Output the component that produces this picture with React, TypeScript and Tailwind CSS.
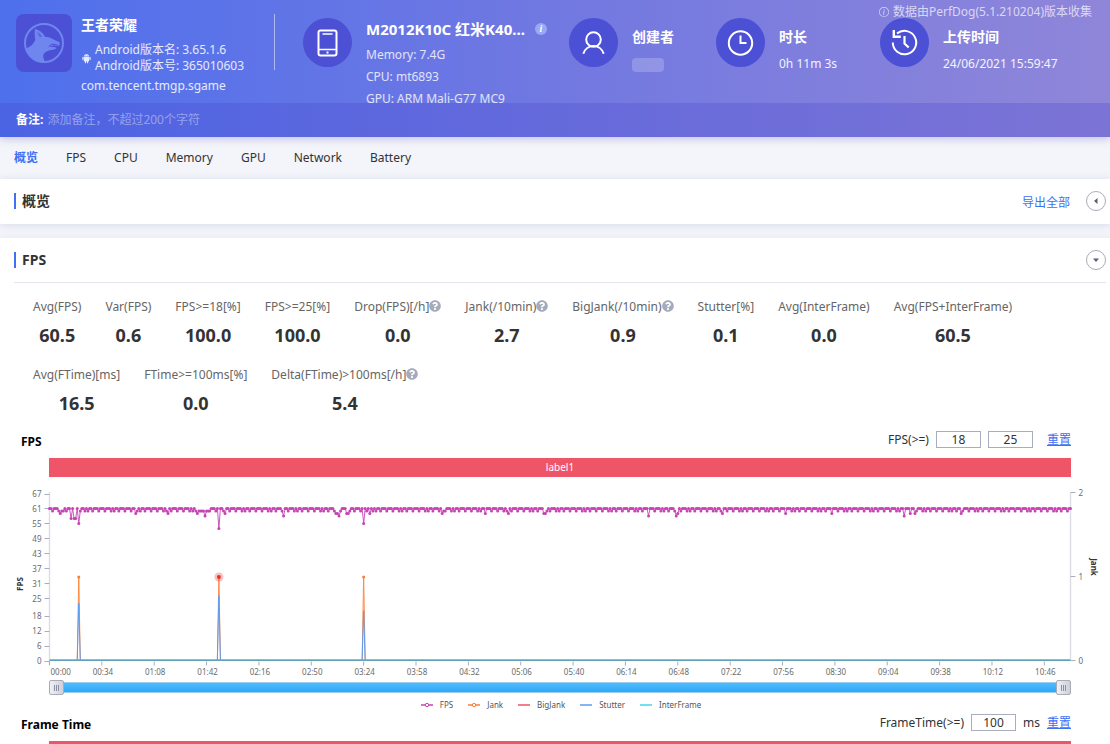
import { useLayoutEffect, useRef, useState } from 'react'
import type { ReactNode } from 'react'
import { AiFillAndroid } from 'react-icons/ai'
import { BsInfoCircle } from 'react-icons/bs'
import { FaQuestionCircle } from 'react-icons/fa'

interface Stat {
  label: string
  value: string
  help?: boolean
}

const TABS = ['概览', 'FPS', 'CPU', 'Memory', 'GPU', 'Network', 'Battery']

const STATS: Stat[] = [
  { label: 'Avg(FPS)', value: '60.5' },
  { label: 'Var(FPS)', value: '0.6' },
  { label: 'FPS>=18[%]', value: '100.0' },
  { label: 'FPS>=25[%]', value: '100.0' },
  { label: 'Drop(FPS)[/h]', value: '0.0', help: true },
  { label: 'Jank(/10min)', value: '2.7', help: true },
  { label: 'BigJank(/10min)', value: '0.9', help: true },
  { label: 'Stutter[%]', value: '0.1' },
  { label: 'Avg(InterFrame)', value: '0.0' },
  { label: 'Avg(FPS+InterFrame)', value: '60.5' },
]

const FRAME_STATS: Stat[] = [
  { label: 'Avg(FTime)[ms]', value: '16.5' },
  { label: 'FTime>=100ms[%]', value: '0.0' },
  { label: 'Delta(FTime)>100ms[/h]', value: '5.4', help: true },
]

const DURATION = 663
const FPS_TICKS = [67, 61, 55, 49, 43, 37, 31, 25, 18, 12, 6, 0]

// seconds where the frame rate leaves the usual 60/61 band
const DIPS: Record<number, number> = {
  7: 59, 8: 60, 9: 60, 14: 57, 15: 61, 16: 57, 17: 57, 18: 61, 19: 55, 20: 60, 56: 59, 77: 59,
  95: 60, 96: 59, 97: 60, 98: 60, 99: 60, 100: 60, 101: 58, 102: 60, 103: 60, 110: 53, 114: 59,
  152: 58, 186: 59, 187: 59, 188: 58, 193: 59, 194: 59, 204: 55, 208: 59, 255: 59, 256: 60, 283: 59,
  298: 59, 321: 59, 322: 59, 323: 60, 389: 58, 407: 58, 408: 59, 437: 59, 478: 59, 508: 59, 555: 58,
  559: 59, 562: 59, 592: 59,
}
const PATTERN = [61, 61, 60, 61, 61, 61, 60, 61, 60, 61, 61, 60, 61, 61, 61, 60, 61]
const FPS_SERIES = Array.from({ length: DURATION + 1 }, (_, t) => DIPS[t] ?? PATTERN[t % PATTERN.length])

const JANKS = [
  { t: 19, stutter: 23 },
  { t: 110, stutter: 26 },
  { t: 204, stutter: 20 },
]

const LEGEND = [
  { name: 'FPS', color: '#c644b4', dot: true },
  { name: 'Jank', color: '#fb7d3c', dot: true },
  { name: 'BigJank', color: '#ee5566', dot: false },
  { name: 'Stutter', color: '#5c9df5', dot: false },
  { name: 'InterFrame', color: '#45d5ee', dot: false },
]

function formatTime(seconds: number) {
  const m = String(Math.floor(seconds / 60)).padStart(2, '0')
  const s = String(seconds % 60).padStart(2, '0')
  return `${m}:${s}`
}

function WolfLogo() {
  return (
    <svg viewBox="6 6 168 174" className="h-[58px] w-14 shrink-0 rounded-lg bg-[#4b50d4]" aria-label="PerfDog">
      <circle cx="90" cy="93" r="57" fill="none" stroke="#6f86ee" strokeWidth="6" />
      <path
        d="M63 50 L78 57 Q88 64 93 74 Q108 74 120 83 L137 91 L137 98 L131 102 L118 100 L106 105 L122 105 L128 109 Q118 115 108 115 Q92 119 88 128 Q86 138 92 148 Q66 150 48 132 Q38 120 38 108 Q54 104 64 84 Q60 66 63 50 Z"
        fill="#6f86ee"
      />
      <path d="M69 60 Q80 64 85 74 L77 76 Q73 68 69 60 Z" fill="#5b67df" />
      <path d="M104 104 L114 96 L131 99" fill="none" stroke="#4b50d4" strokeWidth="3" />
    </svg>
  )
}

function RoundIcon({ children }: { children: ReactNode }) {
  return (
    <svg
      viewBox="0 0 49 49"
      className="h-[49px] w-[49px] shrink-0 rounded-full bg-[#4b50d4]"
      fill="none"
      stroke="#fff"
      strokeWidth="2"
      aria-hidden="true"
    >
      {children}
    </svg>
  )
}

function Header() {
  return (
    <header className="relative z-10 bg-linear-to-r/srgb from-[#4e70ed] via-[#7178e1] to-[#8f86d9] text-white shadow-[0_2px_8px_rgba(100,95,200,0.35)]">
      <p className="absolute top-1 right-[18px] flex items-center gap-1 leading-4 text-white/70">
        <BsInfoCircle size={10} />
        数据由PerfDog(5.1.210204)版本收集
      </p>
      <div className="flex h-[103px] items-start overflow-hidden">
        <div className="flex w-[303px] shrink-0 pt-3.5 pl-4">
          <WolfLogo />
          <div className="w-[202px] pl-[9px]">
            <h1 className="text-sm leading-[22px] font-bold">王者荣耀</h1>
            <div className="mt-1.5 flex items-center gap-[3px] leading-4 text-white/85">
              <AiFillAndroid size={11} className="shrink-0" />
              <p className="whitespace-nowrap">
                Android版本名: 3.65.1.6
                <br />
                Android版本号: 365010603
              </p>
            </div>
            <p className="mt-1 leading-4 text-white/85">com.tencent.tmgp.sgame</p>
          </div>
          <div className="h-14 w-px bg-white/50" />
        </div>
        <div className="flex w-[266px] shrink-0 gap-3.5 pt-[18px]">
          <RoundIcon>
            <rect x="15.5" y="12.5" width="18" height="25" rx="2" />
            <path d="M19.5 16h10M16 31.5h17" strokeWidth="1.6" />
            <path d="M23.5 34.5h2" />
          </RoundIcon>
          <div className="leading-[22px] whitespace-nowrap text-white/80">
            <h2 className="flex items-center gap-2.5 text-[15px] leading-[22px] font-bold text-white">
              M2012K10C 红米K40...
              <span className="flex size-3 items-center justify-center rounded-full bg-[#9aa8f4] font-['Liberation_Serif',serif] text-[10px] leading-3 italic">
                i
              </span>
            </h2>
            <p className="mt-1">Memory: 7.4G</p>
            <p>CPU: mt6893</p>
            <p>GPU: ARM Mali-G77 MC9</p>
          </div>
        </div>
        <div className="flex w-[147px] shrink-0 gap-3.5 pt-[18px]">
          <RoundIcon>
            <circle cx="24.5" cy="21.5" r="7.3" />
            <path d="M14.3 35.8A10.6 10.6 0 0 1 34.7 35.8" />
          </RoundIcon>
          <div className="pt-[9px]">
            <h2 className="text-sm leading-5 font-bold">创建者</h2>
            <div className="mt-[11px] h-3.5 w-8 rounded-sm bg-white/20" />
          </div>
        </div>
        <div className="flex w-[164px] shrink-0 gap-3.5 pt-[18px]">
          <RoundIcon>
            <circle cx="24.5" cy="25" r="11.7" />
            <path d="M24.5 17.5v7.5h6" />
          </RoundIcon>
          <div className="pt-[9px]">
            <h2 className="text-sm leading-5 font-bold">时长</h2>
            <p className="mt-[9px] leading-4 text-white/90">0h 11m 3s</p>
          </div>
        </div>
        <div className="flex gap-3.5 pt-[18px]">
          <RoundIcon>
            <path d="M12.8 24.5A11.7 11.7 0 1 0 17 15.6" />
            <path d="M13.8 12v6.8h7" strokeWidth="2.4" />
            <path d="M24.5 18v7.5l4.2 4" strokeWidth="2.2" />
          </RoundIcon>
          <div className="pt-[9px]">
            <h2 className="text-sm leading-5 font-bold">上传时间</h2>
            <p className="mt-[9px] leading-4 whitespace-nowrap text-white/90">24/06/2021 15:59:47</p>
          </div>
        </div>
      </div>
      <label className="flex h-[34px] items-center gap-1 bg-[#433fcb]/25 px-4">
        <span className="font-bold">备注:</span>
        <input
          type="text"
          placeholder="添加备注，不超过200个字符"
          className="flex-1 bg-transparent outline-none placeholder:text-white/40"
        />
      </label>
    </header>
  )
}

function SectionTitle({ title, open, children }: { title: string; open: boolean; children?: ReactNode }) {
  return (
    <div className="flex h-11 items-center">
      <h2 className="flex items-center gap-1.5 text-sm leading-5 font-bold text-[#333]">
        <span className="h-4 w-0.5 bg-[#4070f4]" />
        {title}
      </h2>
      <div className="ml-auto flex items-center gap-4">
        {children}
        <button
          type="button"
          aria-label={open ? `收起${title}` : `展开${title}`}
          className="flex size-5 items-center justify-center rounded-full border border-[#a9abba]"
        >
          <svg viewBox="0 0 8 8" className="size-2" fill="#5c5c78">
            {open ? <path d="M1 2.5h6L4 6z" /> : <path d="M5.5 1v6L2 4z" />}
          </svg>
        </button>
      </div>
    </div>
  )
}

function StatRow({ stats }: { stats: Stat[] }) {
  return (
    <dl className="flex flex-wrap gap-x-6 gap-y-4">
      {stats.map((stat) => (
        <div key={stat.label} className="text-center">
          <dt className="flex items-center leading-[18px] text-[#666]">
            {stat.label}
            {stat.help && <FaQuestionCircle size={12} className="mb-0.5 text-[#a6abbc]" />}
          </dt>
          <dd className="mt-[5px] text-lg leading-7 font-bold text-[#333]">{stat.value}</dd>
        </div>
      ))}
    </dl>
  )
}

function ThresholdInput({ label, value }: { label: string; value: string }) {
  const [text, setText] = useState(value)
  return (
    <input
      type="text"
      aria-label={label}
      value={text}
      onChange={(event) => setText(event.target.value)}
      className="h-[17px] w-[45px] border border-[#a9adbd] bg-white text-center leading-4 text-[#333] outline-none"
    />
  )
}

function ChartHeader({ title, children }: { title: string; children: ReactNode }) {
  return (
    <div className="flex h-[17px] items-center pr-[39px] pl-[21px]">
      <h3 className="pt-1 leading-4 font-bold text-black">{title}</h3>
      <div className="ml-auto flex items-center gap-[7px] text-[#333]">
        {children}
        <a href="#reset" className="text-[#4070f4] underline">
          重置
        </a>
      </div>
    </div>
  )
}

function FpsChart() {
  const ref = useRef<HTMLDivElement>(null)
  const [width, setWidth] = useState(1110)

  useLayoutEffect(() => {
    const el = ref.current
    if (!el) return
    const update = () => setWidth(el.clientWidth)
    update()
    const observer = new ResizeObserver(update)
    observer.observe(el)
    return () => observer.disconnect()
  }, [])

  const left = 49.5
  const right = width - 39.5
  const bottom = 183.5
  const top = 16.5
  const x = (t: number) => left + ((right - left) * t) / DURATION
  const y = (fps: number) => bottom - ((bottom - top) * fps) / 67
  const ticks = Array.from({ length: 20 }, (_, i) => i * 34)
  const line = FPS_SERIES.map((fps, t) => `${t ? 'L' : 'M'}${x(t).toFixed(1)} ${y(fps).toFixed(1)}`).join('')
  const peak = (t: number, h: number) =>
    `M${x(t - 1)} ${bottom}L${x(t)} ${h}L${x(t + 1)} ${bottom}`
  const mid = (top + bottom) / 2

  return (
    <div ref={ref}>
      <svg width={width} height="203" className="block" fontSize="8" fill="#6b6b6b">
        <path d={`M${left} 15V${bottom + 4}M${right} 15V${bottom}`} stroke="#dcdde8" strokeWidth="1.4" />
        {FPS_TICKS.map((fps) => (
          <g key={fps}>
            <path d={`M${left - 5} ${Math.round(y(fps)) + 0.5}h5`} stroke="#a9adc2" />
            <text x={left - 8} y={y(fps) + 3.5} textAnchor="end">
              {fps}
            </text>
          </g>
        ))}
        {[0, 1, 2].map((jank) => {
          const jy = bottom - jank * 84
          return (
            <g key={jank}>
              <path d={`M${right} ${jy}h5`} stroke="#a9adc2" />
              <text x={right + 8} y={jy + 3}>
                {jank}
              </text>
            </g>
          )
        })}
        {ticks.map((t) => (
          <g key={t}>
            <path d={`M${x(t)} ${bottom + 1}v4`} stroke="#a9adc2" />
            <text x={t === 0 ? left + 1 : x(t) + 1} y="198" textAnchor={t === 0 ? 'start' : 'middle'}>
              {formatTime(t)}
            </text>
          </g>
        ))}
        <path d={`M${left} ${bottom - 1}H${right}`} stroke="#fb9c5c" />
        <path d={`M${left} ${bottom}H${right}`} stroke="#5fa3b8" />
        {JANKS.map(({ t, stutter }) => (
          <g key={t}>
            <path d={peak(t, mid)} fill="none" stroke="#fb8a45" />
            <path d={peak(t, y(stutter))} fill="none" stroke="#5c9df5" />
            {t === 110 && <circle cx={x(t)} cy={mid} r="4.5" fill="#e2342f" opacity="0.3" />}
            <circle cx={x(t)} cy={mid} r={t === 110 ? 2 : 1.5} fill={t === 110 ? '#e2342f' : '#fb7d3c'} />
          </g>
        ))}
        <path d={line} fill="none" stroke="#c644b4" strokeWidth="0.9" />
        {FPS_SERIES.map((fps, t) => (
          <circle key={t} cx={x(t)} cy={y(fps)} r="1.5" fill="#c644b4" />
        ))}
        <text transform={`translate(23 ${mid + 7}) rotate(-90)`} textAnchor="middle" fontWeight="bold" fill="#333">
          FPS
        </text>
        <text transform={`translate(${width - 19} ${mid - 10}) rotate(90)`} textAnchor="middle" fontWeight="bold" fill="#333">
          Jank
        </text>
      </svg>
    </div>
  )
}

const THUMB =
  'pointer-events-none absolute inset-0 h-[15px] w-full appearance-none bg-transparent [&::-webkit-slider-thumb]:pointer-events-auto [&::-webkit-slider-thumb]:h-[15px] [&::-webkit-slider-thumb]:w-[15px] [&::-webkit-slider-thumb]:appearance-none [&::-webkit-slider-thumb]:rounded-xs [&::-webkit-slider-thumb]:border [&::-webkit-slider-thumb]:border-[#a9abb8] [&::-webkit-slider-thumb]:bg-[repeating-linear-gradient(90deg,#8d90a2_0_1px,transparent_1px_2px),linear-gradient(90deg,#f0f0f4,#cfcfda)] [&::-webkit-slider-thumb]:bg-[size:5px_6px,100%_100%] [&::-webkit-slider-thumb]:bg-center [&::-webkit-slider-thumb]:bg-no-repeat'

function RangeScrollbar() {
  const [range, setRange] = useState({ from: 0, to: DURATION })
  return (
    <div className="relative mr-[39px] ml-[49px] flex h-[15px] items-center">
      <div className="h-[11px] w-full border-y border-[#9ccbed] bg-linear-to-b from-[#4dbbfb] to-[#2ba8f8]" />
      <input
        type="range"
        aria-label="开始时间"
        min={0}
        max={DURATION}
        value={range.from}
        onChange={(event) => setRange({ ...range, from: Number(event.target.value) })}
        className={THUMB}
      />
      <input
        type="range"
        aria-label="结束时间"
        min={0}
        max={DURATION}
        value={range.to}
        onChange={(event) => setRange({ ...range, to: Number(event.target.value) })}
        className={THUMB}
      />
    </div>
  )
}

function Legend() {
  return (
    <ul className="mt-1 flex justify-center gap-[15px] pl-3 text-[8px] leading-3 text-[#555]">
      {LEGEND.map((item) => (
        <li key={item.name} className="flex items-center gap-[7px]">
          <svg width="12" height="6" fill="#fff" stroke={item.color}>
            <path d="M0 3h12" strokeWidth="1.5" />
            {item.dot && <circle cx="6" cy="3" r="1.7" />}
          </svg>
          {item.name}
        </li>
      ))}
    </ul>
  )
}

export default function App() {
  return (
    <div className="h-screen overflow-hidden bg-[#f4f5fa] font-['Noto_Sans','Noto_Sans_CJK_SC',sans-serif] text-xs">
      <Header />
      <nav className="flex h-[42px] items-center gap-7 px-3.5 text-[#333]">
        {TABS.map((tab, i) => (
          <a key={tab} href={`#${tab}`} className={i === 0 ? 'font-bold text-[#4070f4]' : ''}>
            {tab}
          </a>
        ))}
      </nav>
      <section className="bg-white pr-1 pb-px pl-3.5 shadow-[0_1px_8px_rgba(90,95,160,0.18)]">
        <SectionTitle title="概览" open={false}>
          <button type="button" className="pt-[3px] text-[#4070f4]">
            导出全部
          </button>
        </SectionTitle>
      </section>
      <section className="mt-3.5 bg-white pb-10 shadow-[0_1px_8px_rgba(90,95,160,0.12)]">
        <div className="mr-1 ml-3.5 border-b border-[#e3e4ec]">
          <SectionTitle title="FPS" open />
        </div>
        <div className="flex flex-col gap-[17px] px-[33px] pt-[15px] pb-3.5">
          <StatRow stats={STATS} />
          <StatRow stats={FRAME_STATS} />
        </div>
        <ChartHeader title="FPS">
          <span>FPS(&gt;=)</span>
          <ThresholdInput label="FPS(>=) 1" value="18" />
          <div className="flex pr-[7px]">
            <ThresholdInput label="FPS(>=) 2" value="25" />
          </div>
        </ChartHeader>
        <div className="mt-2.5 mr-[39px] ml-[49px] h-[19px] bg-[#ee5566] text-center text-[10px] leading-[18px] text-white">
          label1
        </div>
        <FpsChart />
        <RangeScrollbar />
        <Legend />
        <div className="pt-[3px]">
          <ChartHeader title="Frame Time">
            <span>FrameTime(&gt;=)</span>
            <ThresholdInput label="FrameTime(>=)" value="100" />
            <span>ms</span>
          </ChartHeader>
        </div>
        <div className="mt-2.5 mr-[39px] ml-[49px] h-[19px] bg-[#ee5566]" />
      </section>
    </div>
  )
}
